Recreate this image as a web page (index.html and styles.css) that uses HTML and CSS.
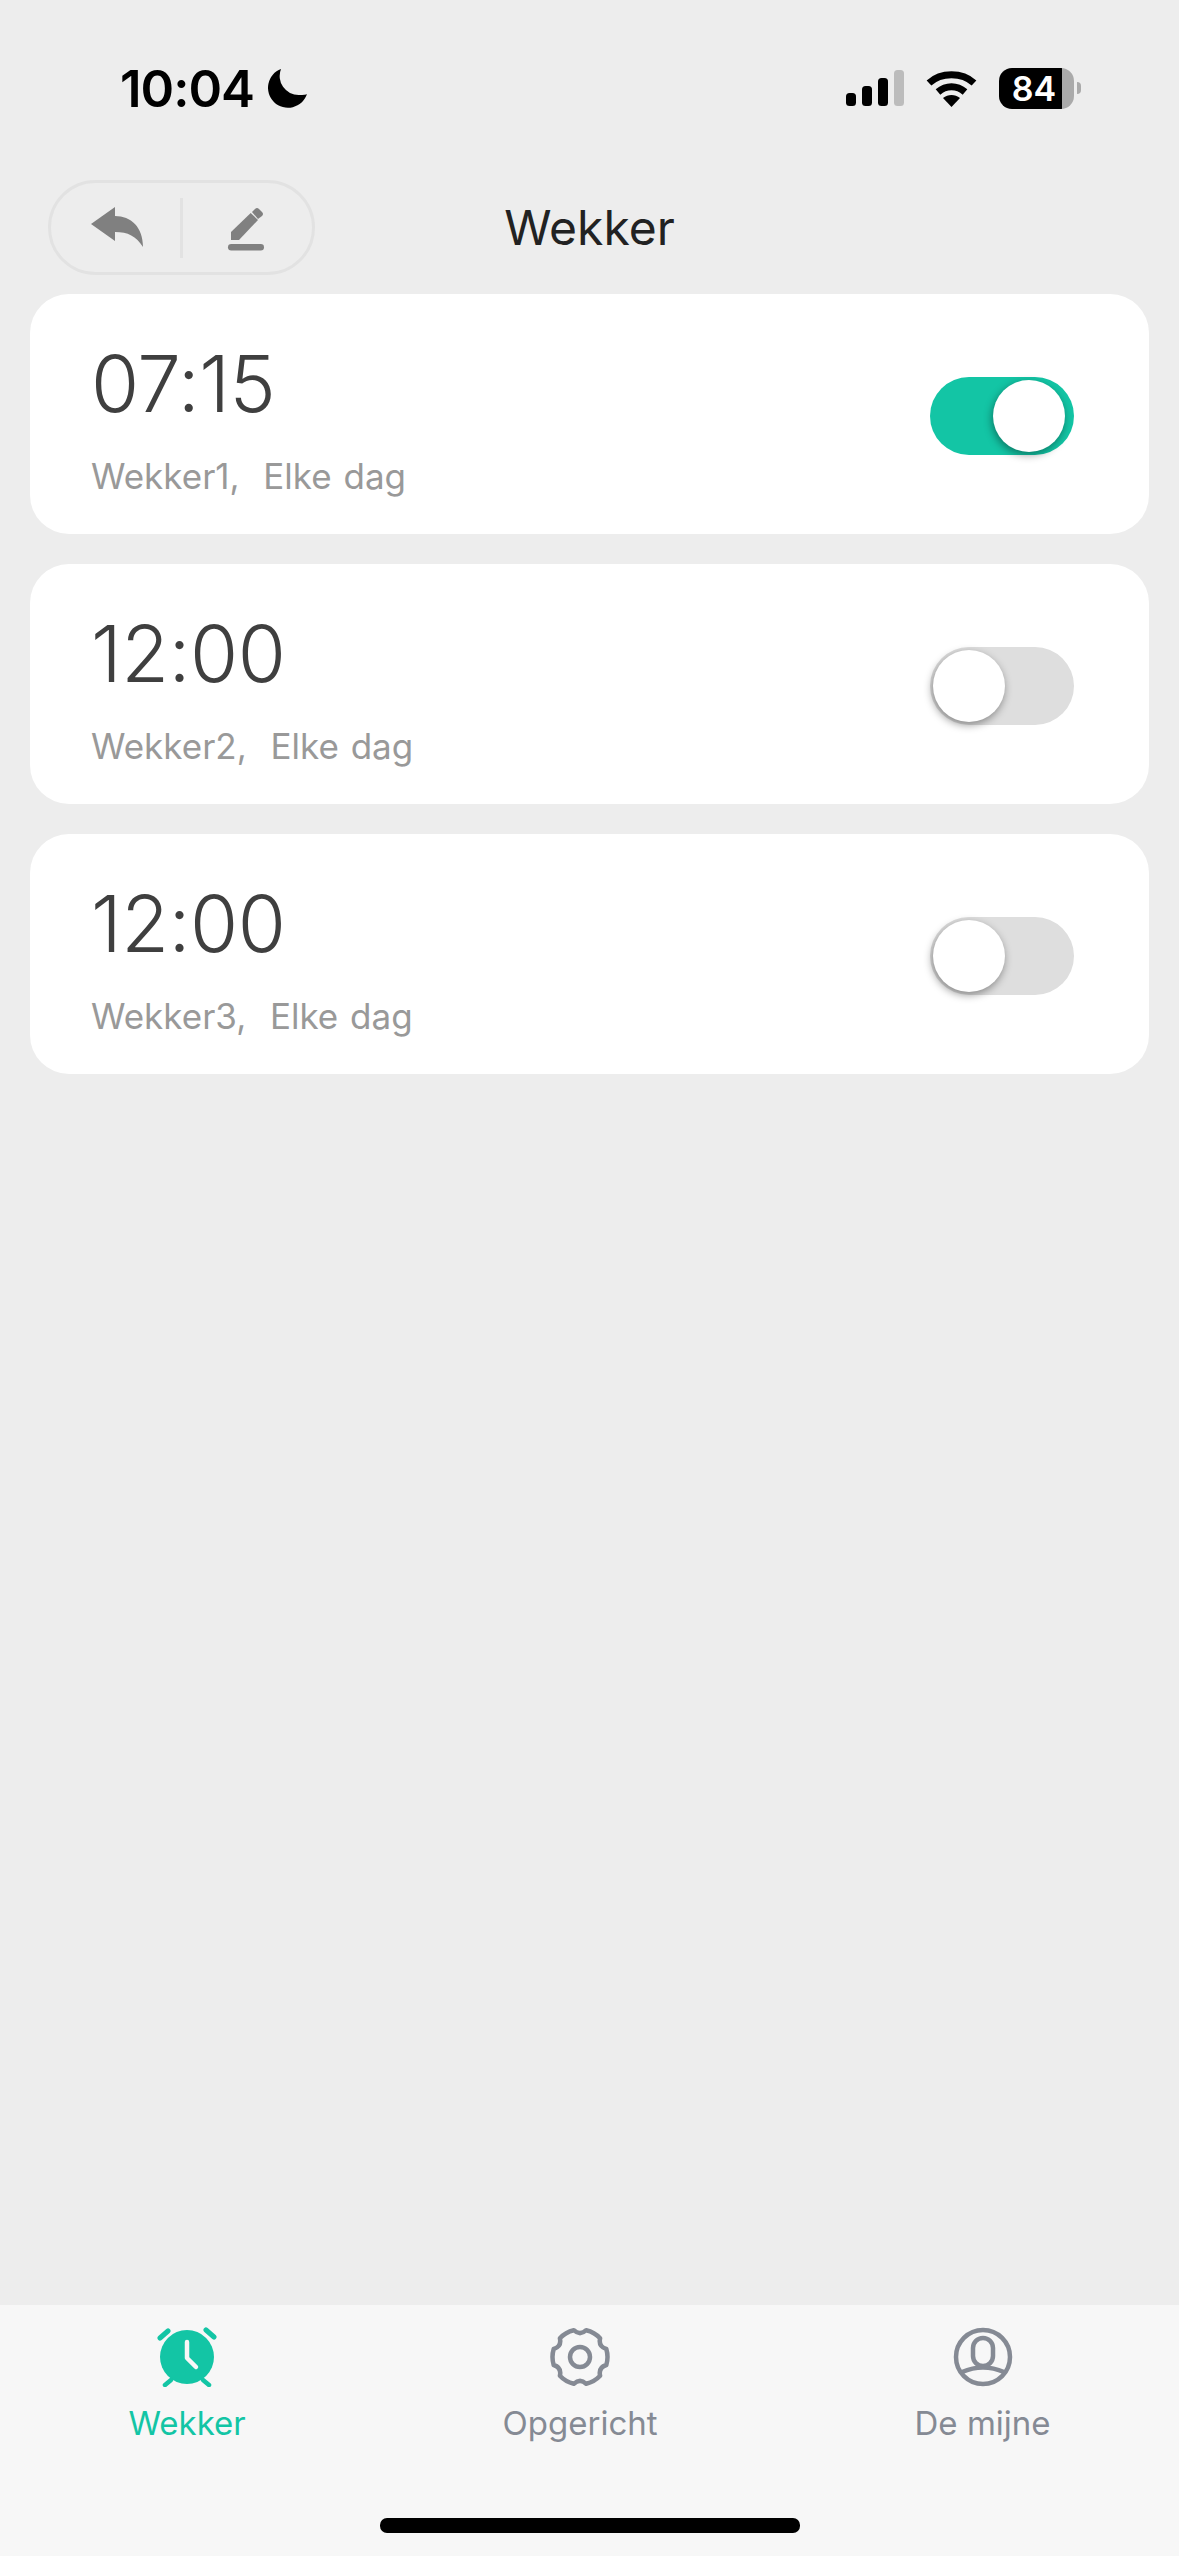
FILE: index.html
```html
<!DOCTYPE html>
<html lang="nl">
<head>
    <meta charset="UTF-8">
    <meta name="viewport" content="width=device-width, initial-scale=1.0">
    <title>Wekker</title>
    <link rel="stylesheet" href="styles.css">
</head>
<body>
    <div class="page">
        <div class="status-bar">
            <div class="status-left">
                <span class="clock">10:04</span>
                <svg class="moon" viewBox="0 0 39 39"><path d="M13 0A20 20 0 1 0 39 25Q38 26 31 26A19 19 0 0 1 13 0Z"/></svg>
            </div>
            <div class="status-right">
                <svg class="signal" viewBox="0 0 58 36">
                    <rect x="0" y="23" width="10" height="13" rx="3.5"/>
                    <rect x="16" y="16" width="10" height="20" rx="3.5"/>
                    <rect x="32" y="8" width="10" height="28" rx="3.5"/>
                    <rect x="48" y="0" width="10" height="36" rx="3.5" fill="#bcbcbc"/>
                </svg>
                <svg class="wifi" viewBox="0 0 51 37">
                    <path d="M3 13C15 2 36 2 48 13" fill="none" stroke="#000" stroke-width="7"/>
                    <path d="M12 22C20 15 31 15 39 22" fill="none" stroke="#000" stroke-width="7"/>
                    <path d="M17 28C22 24 29 24 34 28L25.5 37Z"/>
                </svg>
                <div class="battery"><span>84</span></div>
                <div class="battery-nub"></div>
            </div>
        </div>

        <div class="nav">
            <div class="nav-pill">
                <svg class="back-icon" viewBox="0 0 54 44"><path d="M1 18L25 1V10C41 10 53 21 53 41C46 30 38 26 25 26V35Z"/></svg>
                <span class="nav-divider"></span>
                <svg class="edit-icon" viewBox="0 0 40 48">
                    <path d="M5 27L24.700 8L32 15L13 35H5Z"/>
                    <path d="M26 7L29 4Q31 2 33 4L36 7Q38 9 36 11L32 14Z"/>
                    <rect x="2" y="39" width="36" height="6.500" rx="3.200"/>
                </svg>
            </div>
            <div class="nav-title">Wekker</div>
            <div></div>
        </div>

        <div class="alarm-list">
            <div class="alarm-card">
                <div class="alarm-text">
                    <div class="alarm-time">07:15</div>
                    <div class="alarm-info">Wekker1,&nbsp; Elke dag</div>
                </div>
                <div class="toggle on"><span class="knob"></span></div>
            </div>
            <div class="alarm-card">
                <div class="alarm-text">
                    <div class="alarm-time">12:00</div>
                    <div class="alarm-info">Wekker2,&nbsp; Elke dag</div>
                </div>
                <div class="toggle"><span class="knob"></span></div>
            </div>
            <div class="alarm-card">
                <div class="alarm-text">
                    <div class="alarm-time">12:00</div>
                    <div class="alarm-info">Wekker3,&nbsp; Elke dag</div>
                </div>
                <div class="toggle"><span class="knob"></span></div>
            </div>
        </div>

        <div class="tab-bar">
            <div class="tabs">
                <div class="tab active">
                    <svg class="tab-icon" viewBox="0 0 60 60">
                        <circle cx="30" cy="30" r="27" fill="#13c5a5"/>
                        <path d="M30 15V31L39 40" fill="none" stroke="#f7f7f7" stroke-width="4.500" stroke-linecap="round" stroke-linejoin="round"/>
                        <path d="M3 11L11 4M49 3L57 10" fill="none" stroke="#13c5a5" stroke-width="5" stroke-linecap="round"/>
                        <path d="M8 58L14 53M46 53L52 58" fill="none" stroke="#13c5a5" stroke-width="4.500" stroke-linecap="round"/>
                    </svg>
                    <span>Wekker</span>
                </div>
                <div class="tab">
                    <svg class="tab-icon" viewBox="0 0 60 60" fill="none" stroke="#858a94" stroke-width="4.500">
                        <path d="M23.800 3.200Q30 9 36.200 3.200A27.500 27.500 0 0 1 50.100 11.200Q48.200 19.500 56.300 22A27.500 27.500 0 0 1 56.300 38Q48.200 40.500 50.100 48.800A27.500 27.500 0 0 1 36.200 56.800Q30 51 23.800 56.800A27.500 27.500 0 0 1 9.900 48.800Q11.800 40.500 3.700 38A27.500 27.500 0 0 1 3.700 22Q11.800 19.500 9.900 11.200A27.500 27.500 0 0 1 23.800 3.200Z" stroke-linejoin="round"/>
                        <circle cx="30" cy="30" r="10"/>
                    </svg>
                    <span>Opgericht</span>
                </div>
                <div class="tab">
                    <svg class="tab-icon" viewBox="0 0 60 60" fill="none" stroke="#858a94" stroke-width="4.500">
                        <circle cx="30" cy="30" r="27"/>
                        <rect x="20" y="11" width="20" height="28" rx="10"/>
                        <path d="M9 45Q30 36 51 45"/>
                    </svg>
                    <span>De mijne</span>
                </div>
            </div>
            <div class="home-indicator"></div>
        </div>
    </div>
</body>
</html>
```

FILE: styles.css
```css
body {
    margin: 0;
    font-family: Inter, "Liberation Sans", sans-serif;
    background-color: #ededed;
}
.page {
    display: flex;
    flex-direction: column;
    height: 2556px;
    overflow: hidden;
}

/* status bar */
.status-bar {
    display: flex;
    justify-content: space-between;
    align-items: center;
    height: 176px;
    padding: 0 98px 0 120px;
    flex-shrink: 0;
}
.status-left,
.status-right {
    display: flex;
    align-items: center;
}
.clock {
    font-size: 51px;
    font-weight: 600;
    color: #000;
    letter-spacing: -1px;
}
.moon {
    width: 39px;
    height: 39px;
    margin-left: 14px;
}
.signal {
    width: 58px;
    height: 36px;
}
.wifi {
    width: 51px;
    height: 37px;
    margin-left: 22px;
}
.battery {
    display: flex;
    align-items: center;
    justify-content: center;
    box-sizing: border-box;
    width: 75px;
    height: 41px;
    margin-left: 22px;
    padding-right: 5px;
    border-radius: 13px;
    background: linear-gradient(to right, #000 84%, #aaa 84%);
    color: #fff;
    font-size: 34px;
    font-weight: 600;
}
.battery-nub {
    width: 4px;
    height: 12px;
    margin-left: 3px;
    border-radius: 0 6px 6px 0;
    background-color: #aaa;
}

/* top nav */
.nav {
    display: grid;
    grid-template-columns: 1fr auto 1fr;
    align-items: center;
    margin: 4px 0 19px;
    padding-left: 48px;
    padding-right: 48px;
}
.nav-pill {
    display: flex;
    align-items: center;
    box-sizing: border-box;
    width: 267px;
    height: 95px;
    border: 3px solid #e2e2e2;
    border-radius: 48px;
}
.back-icon {
    width: 54px;
    height: 44px;
    margin-left: 39px;
    fill: #808080;
}
.nav-divider {
    width: 3px;
    height: 60px;
    margin-left: 36px;
    background-color: #e2e2e2;
}
.edit-icon {
    width: 40px;
    height: 48px;
    margin-top: 3px;
    margin-left: 43px;
    fill: #808080;
}
.nav-title {
    font-size: 48px;
    color: #222;
}

/* alarm cards */
.alarm-list {
    display: flex;
    flex-direction: column;
    gap: 30px;
    padding: 0 30px;
    flex: 1;
}
.alarm-card {
    display: flex;
    justify-content: space-between;
    align-items: center;
    box-sizing: border-box;
    height: 240px;
    padding: 4px 75px 0 61px;
    border-radius: 39px;
    background-color: #fff;
}
.alarm-text {
    margin-top: 2px;
}
.alarm-time {
    font-size: 78px;
    font-weight: 350;
    line-height: 94px;
    letter-spacing: -0.5px;
    color: #3f3f3f;
}
.alarm-info {
    margin-top: 24px;
    font-size: 35px;
    line-height: 42px;
    word-spacing: 2px;
    color: #999;
}
.toggle {
    display: flex;
    align-items: center;
    box-sizing: border-box;
    width: 144px;
    height: 78px;
    padding: 0 3px;
    border-radius: 39px;
    background-color: #dedede;
}
.toggle.on {
    justify-content: flex-end;
    padding: 0 9px;
    background-color: #13c5a5;
}
.knob {
    width: 72px;
    height: 72px;
    border-radius: 50%;
    background-color: #fff;
    box-shadow: -1px 3px 8px rgba(0, 0, 0, 0.4);
}

/* bottom tabs */
.tab-bar {
    height: 251px;
    flex-shrink: 0;
    background-color: #f7f7f7;
}
.tabs {
    display: flex;
    justify-content: space-around;
    padding-top: 22px;
}
.tab {
    display: flex;
    flex-direction: column;
    align-items: center;
    font-size: 33px;
    color: #858a94;
}
.tab.active {
    color: #13c5a5;
}
.tab-icon {
    width: 60px;
    height: 60px;
    margin-bottom: 16px;
}
.home-indicator {
    width: 420px;
    height: 15px;
    margin: 75px auto 0;
    border-radius: 7px;
    background-color: #000;
}
```
